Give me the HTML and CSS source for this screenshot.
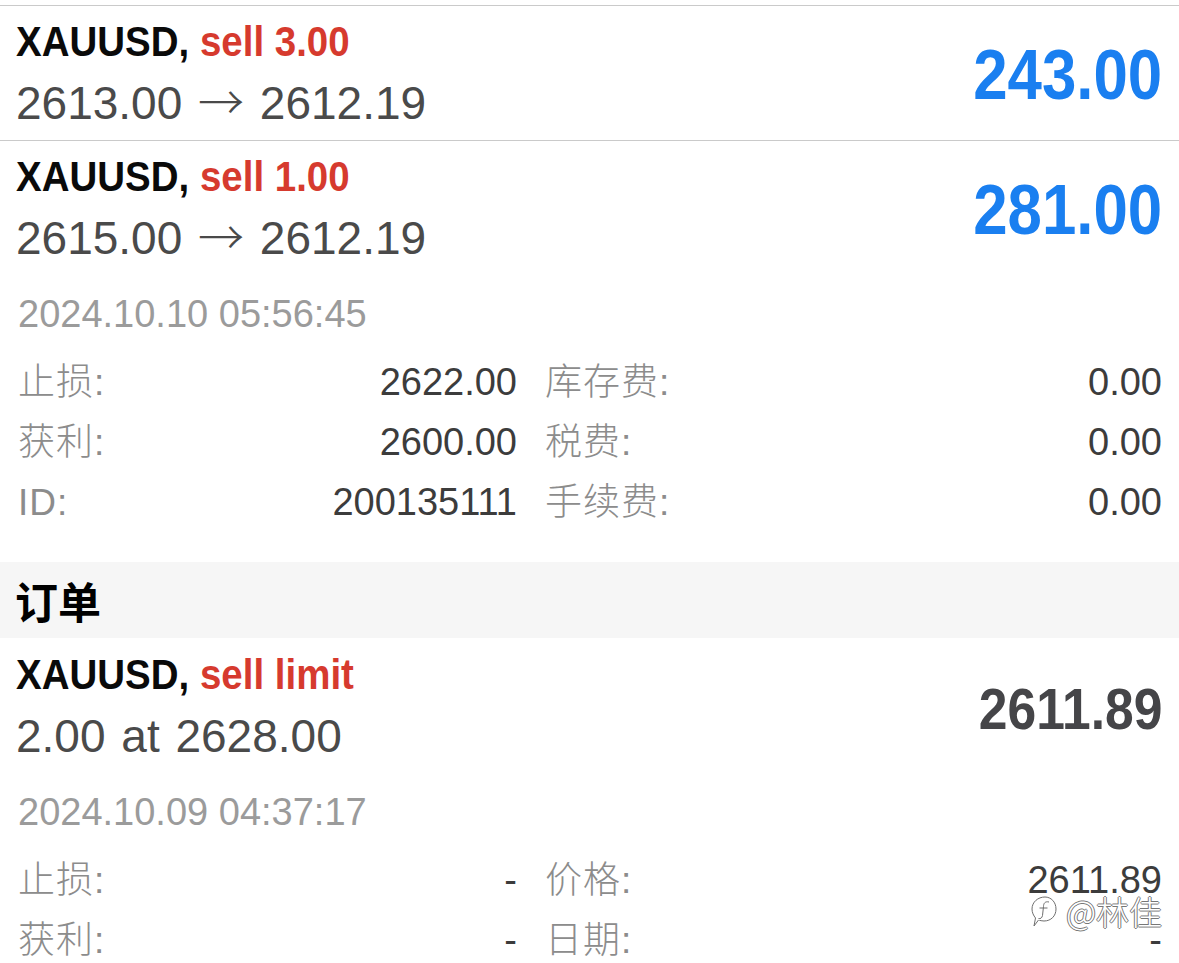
FILE: index.html
```html
<!DOCTYPE html>
<html lang="zh-CN">
<head>
    <meta charset="UTF-8">
    <meta name="viewport" content="width=device-width, initial-scale=1.0">
    <title>交易</title>
    <link rel="stylesheet" href="styles.css">
</head>
<body>
    <div class="page">
        <div class="trade first">
            <div class="trade-info">
                <div class="symbol">XAUUSD, <span class="side">sell 3.00</span></div>
                <div class="prices">2613.00 <span class="arrow">→</span> 2612.19</div>
            </div>
            <div class="profit">243.00</div>
        </div>

        <div class="trade">
            <div class="trade-info">
                <div class="symbol">XAUUSD, <span class="side">sell 1.00</span></div>
                <div class="prices">2615.00 <span class="arrow">→</span> 2612.19</div>
            </div>
            <div class="profit">281.00</div>
        </div>

        <div class="trade-date">2024.10.10 05:56:45</div>
        <div class="details">
            <div class="detail"><span class="label">止损:</span><span class="value">2622.00</span></div>
            <div class="detail"><span class="label">库存费:</span><span class="value">0.00</span></div>
            <div class="detail"><span class="label">获利:</span><span class="value">2600.00</span></div>
            <div class="detail"><span class="label">税费:</span><span class="value">0.00</span></div>
            <div class="detail"><span class="label">ID:</span><span class="value">200135111</span></div>
            <div class="detail"><span class="label">手续费:</span><span class="value">0.00</span></div>
        </div>

        <div class="section-title">订单</div>

        <div class="trade order">
            <div class="trade-info">
                <div class="symbol">XAUUSD, <span class="side">sell limit</span></div>
                <div class="prices">2.00 at 2628.00</div>
            </div>
            <div class="price">2611.89</div>
        </div>

        <div class="trade-date">2024.10.09 04:37:17</div>
        <div class="details">
            <div class="detail"><span class="label">止损:</span><span class="value">-</span></div>
            <div class="detail"><span class="label">价格:</span><span class="value">2611.89</span></div>
            <div class="detail"><span class="label">获利:</span><span class="value">-</span></div>
            <div class="detail"><span class="label">日期:</span><span class="value">-</span></div>
        </div>

        <div class="watermark">
            <svg class="wm-icon" width="28" height="36" viewBox="0 0 28 36">
                <path d="M15 4 C21 4 26 9 26 16 C26 23 21 28 14 28 C12 28 10 27.5 8.5 27 L4 33 L5.5 25 C3.5 22.5 2 19.5 2 16 C2 9 8 4 15 4 Z" fill="none" stroke="#fff" stroke-width="3"/>
                <path d="M15 4 C21 4 26 9 26 16 C26 23 21 28 14 28 C12 28 10 27.5 8.5 27 L4 33 L5.5 25 C3.5 22.5 2 19.5 2 16 C2 9 8 4 15 4 Z" fill="none" stroke="#6f6f6f" stroke-width="1"/>
                <path d="M19 9 C15 8 13.5 10.5 13.5 13.5 L12.5 22.5 C12 25 10.5 26 8.5 25.5 M9.5 15 L17.5 15" fill="none" stroke="#fff" stroke-width="3"/>
                <path d="M19 9 C15 8 13.5 10.5 13.5 13.5 L12.5 22.5 C12 25 10.5 26 8.5 25.5 M9.5 15 L17.5 15" fill="none" stroke="#6f6f6f" stroke-width="1"/>
            </svg>
            <span>@林佳</span>
        </div>
    </div>
</body>
</html>
```

FILE: styles.css
```css
body {
    margin: 0;
    font-family: "Liberation Sans", Arial, "Noto Sans CJK SC", sans-serif;
    background: #fff;
}

.page {
    position: relative;
    padding-top: 5px;
}

.trade {
    display: flex;
    justify-content: space-between;
    align-items: flex-start;
    padding: 10px 17px 0 16px;
    border-top: 1px solid #cacaca;
}

.trade.order {
    border-top: none;
    padding-top: 11px;
}

/* condensed bold look, no narrow face installed */
.symbol {
    font-weight: bold;
    font-size: 43px;
    line-height: 50px;
    color: #0a0a0a;
    white-space: nowrap;
    transform: scaleX(0.895);
    transform-origin: left center;
}

.side {
    color: #d63a2e;
}

.prices {
    height: 74px;
    font-size: 46px;
    line-height: 74px;
    word-spacing: 3px;
    color: #4a4a4a;
}

.arrow {
    font-family: "Noto Sans CJK SC", sans-serif;
    font-weight: 300;
    line-height: 0;
}

.profit {
    font-weight: bold;
    font-size: 71px;
    line-height: 80px;
    margin-top: 19px;
    color: #1a7ff0;
    transform: scaleX(0.87);
    transform-origin: right center;
}

.price {
    font-weight: bold;
    font-size: 58px;
    line-height: 66px;
    margin-top: 27px;
    color: #454548;
    transform: scaleX(0.89);
    transform-origin: right center;
}

.trade-date {
    padding: 9px 18px 0 18px;
    font-size: 38px;
    line-height: 60px;
    color: #9b9b9b;
}

.details {
    display: grid;
    grid-template-columns: 499px 1fr;
    column-gap: 28px;
    padding: 8px 17px 0 18px;
}

.detail {
    display: flex;
    justify-content: space-between;
    align-items: baseline;
    height: 60px;
    line-height: 60px;
}

.label {
    font-family: "Liberation Sans", "Noto Sans CJK SC", sans-serif;
    font-size: 37px;
    font-weight: 300;
    letter-spacing: 1px;
    color: #8c8c8c;
}

.value {
    font-size: 38px;
    color: #3c3c3c;
}

.section-title {
    margin-top: 30px;
    height: 76px;
    display: flex;
    align-items: center;
    padding-left: 15px;
    background: #f6f6f6;
    font-family: "Noto Sans CJK SC", sans-serif;
    font-size: 43px;
    font-weight: bold;
    color: #000;
}

.watermark {
    position: absolute;
    left: 1030px;
    top: 887px;
    display: flex;
    align-items: center;
    gap: 8px;
    font-family: "Noto Sans CJK SC", sans-serif;
    font-size: 33px;
    font-weight: 300;
    color: #fff;
    text-shadow: 1px 0 0 #777, -1px 0 0 #777, 0 1px 0 #777, 0 -1px 0 #777;
}
```
